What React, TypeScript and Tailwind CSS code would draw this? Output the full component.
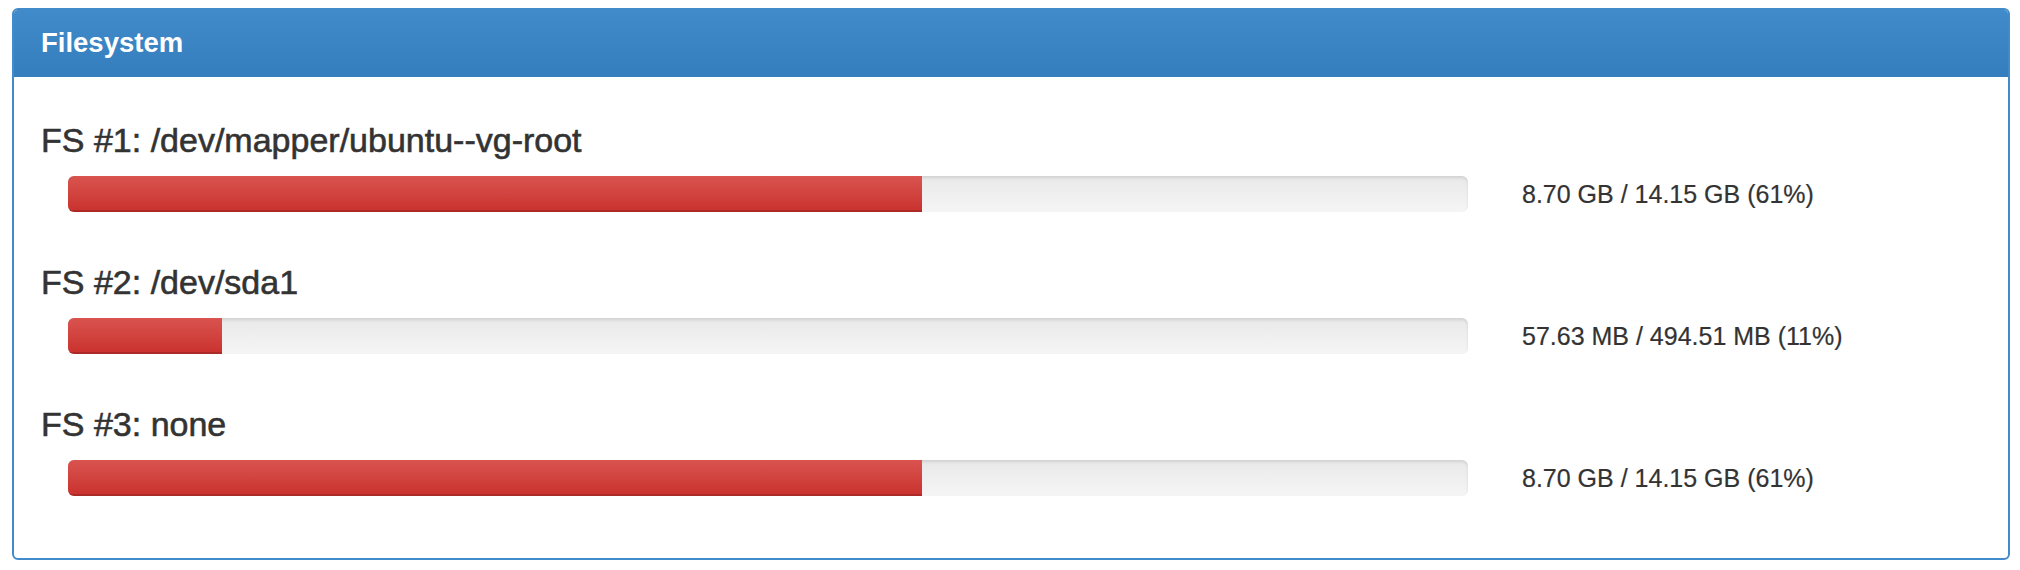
const filesystems = [
  { name: '/dev/mapper/ubuntu--vg-root', used: '8.70 GB', total: '14.15 GB', pct: 61 },
  { name: '/dev/sda1', used: '57.63 MB', total: '494.51 MB', pct: 11 },
  { name: 'none', used: '8.70 GB', total: '14.15 GB', pct: 61 },
]

function Bar({ pct }: { pct: number }) {
  return (
    <div className="h-[36px] w-[1400px] shrink-0 overflow-hidden rounded-[6px] bg-gradient-to-b from-[#e9e9e9] to-[#f5f5f5] shadow-[inset_0_2px_3px_rgba(0,0,0,0.1)]">
      <div
        className="h-full bg-gradient-to-b from-[#d9534f] to-[#c9302c] shadow-[inset_0_-2px_0_rgba(0,0,0,0.15)]"
        style={{ width: `${pct}%` }}
      />
    </div>
  )
}

export default function App() {
  return (
    <div className="h-[570px] w-[2020px] bg-white pl-[12px] pt-[8px] font-['Liberation_Sans',Arial,sans-serif] text-[#333]">
      <div className="h-[552px] w-[1998px] overflow-hidden rounded-[6px] border-2 border-[#428bca]">
        <div className="flex h-[67px] items-center border-b border-[#357ebd] bg-gradient-to-b from-[#428bca] to-[#357ebd] px-[27px]">
          <h2 className="text-[27.5px] font-bold leading-none text-white">Filesystem</h2>
        </div>

        <div className="flex flex-col gap-[52px] px-[27px] pt-[45px]">
          {filesystems.map((fs, i) => (
            <div key={i}>
              <h3 className="mb-[17px] text-[34px] leading-[37px] [-webkit-text-stroke:0.6px_#333]">
                FS #{i + 1}: {fs.name}
              </h3>
              <div className="flex items-center pl-[27px]">
                <Bar pct={fs.pct} />
                <span className="ml-[54px] text-[25px] leading-none [-webkit-text-stroke:0.2px_#333]">
                  {fs.used} / {fs.total} ({fs.pct}%)
                </span>
              </div>
            </div>
          ))}
        </div>
      </div>
    </div>
  )
}
